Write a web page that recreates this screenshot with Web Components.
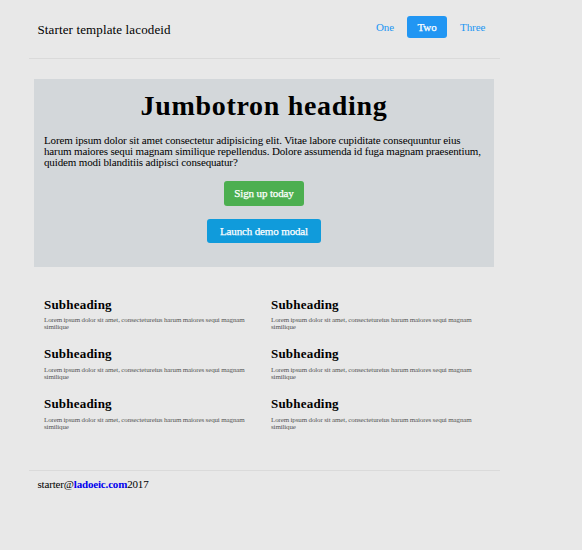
<!DOCTYPE html>
<html lang="en">
<head>
<meta charset="utf-8">
<title>Starter template</title>
<style>
html { background: #e8e8e8; }
body { margin: 0; font-family: "Liberation Serif", "Times New Roman", serif; color: #000; }
</style>
</head>
<body>
<starter-page></starter-page>
<script>
const define = (name, html) => customElements.define(name, class extends HTMLElement {
  constructor() {
    super();
    const t = document.createElement('template');
    t.innerHTML = html;
    this.attachShadow({ mode: 'open' }).append(t.content.cloneNode(true));
  }
});

define('nav-item', `<style>
:host { display: block; box-sizing: border-box; height: 22px; padding: 0 10px; border-radius: 3px; font-size: 11px; line-height: 23px; letter-spacing: -.1px; color: #2196f3; white-space: nowrap; text-align: center; }
:host([active]) { background: #2196f3; color: #fff; width: 40px; padding: 0; -webkit-text-stroke: .25px #fff; }
</style><slot></slot>`);

define('page-header', `<style>
:host { display: flex; justify-content: space-between; box-sizing: border-box; height: 59px; padding: 16px 4.8px 0 8.5px; border-bottom: 1px solid #dadada; }
.brand { font-size: 13px; line-height: 15px; padding-top: 6px; letter-spacing: .13px; white-space: nowrap; }
nav { display: flex; gap: 3px; }
</style><div class="brand"><slot name="brand"></slot></div><nav><slot></slot></nav>`);

define('action-button', `<style>
:host { display: block; box-sizing: border-box; width: 80px; height: 25px; border-radius: 3px; background: #4caf50; color: #fff; font-size: 11px; line-height: 25px; letter-spacing: -.14px; text-align: center; white-space: nowrap; -webkit-text-stroke: .25px #fff; }
:host([kind="modal"]) { width: 114px; height: 24px; line-height: 24px; background: #109bdb; }
</style><slot></slot>`);

define('jumbo-tron', `<style>
:host { display: flex; flex-direction: column; align-items: center; box-sizing: border-box; height: 188px; margin: 20px 5px 0; padding: 10px 10px 0; background: #d3d7da; }
h1 { margin: 0; font-size: 28px; line-height: 34px; letter-spacing: .7px; white-space: nowrap; }
p { align-self: stretch; margin: 12px 0 13px; font-size: 11px; line-height: 11px; white-space: nowrap; letter-spacing: -.14px; }
.actions { display: flex; flex-direction: column; align-items: center; gap: 13px; }
</style><h1><slot name="title"></slot></h1><p><slot></slot></p><div class="actions"><slot name="actions"></slot></div>`);

define('feature-item', `<style>
:host { display: block; }
h4 { margin: 0; font-size: 13px; line-height: 15px; letter-spacing: .2px; }
p { margin: 5.6px 0 0; font-size: 7px; line-height: 7px; letter-spacing: -.14px; color: #555; white-space: nowrap; }
</style><h4>Subheading</h4><p>Lorem ipsum dolor sit amet, consectetureius harum maiores sequi magnam<br>similique</p>`);

define('feature-grid', `<style>
:host { display: grid; grid-template-columns: 227px 1fr; grid-auto-rows: 49.8px; box-sizing: border-box; height: 203px; padding: 29.6px 5px 0 15px; }
</style><slot></slot>`);

define('page-footer', `<style>
:host { display: block; border-top: 1px solid #dadada; padding: 7px 8.5px; font-size: 11px; line-height: 13px; letter-spacing: -.17px; }
</style><slot></slot>`);

define('starter-page', `<style>
:host { display: block; width: 471px; margin-left: 29px; }
jumbo-tron { width: 460px; }
a { color: #00e; font-weight: bold; text-decoration: none; }
</style>
<page-header><span slot="brand">Starter template lacodeid</span><nav-item>One</nav-item><nav-item active>Two</nav-item><nav-item>Three</nav-item></page-header>
<jumbo-tron><span slot="title">Jumbotron heading</span>Lorem ipsum dolor sit amet consectetur adipisicing elit. Vitae labore cupiditate consequuntur eius<br>harum maiores sequi magnam similique repellendus. Dolore assumenda id fuga magnam praesentium,<br>quidem modi blanditiis adipisci consequatur?<action-button slot="actions">Sign up today</action-button><action-button slot="actions" kind="modal">Launch demo modal</action-button></jumbo-tron>
<feature-grid><feature-item></feature-item><feature-item></feature-item><feature-item></feature-item><feature-item></feature-item><feature-item></feature-item><feature-item></feature-item></feature-grid>
<page-footer>starter@<a href="#">ladoeic.com</a>2017</page-footer>`);
</script>
</body>
</html>
